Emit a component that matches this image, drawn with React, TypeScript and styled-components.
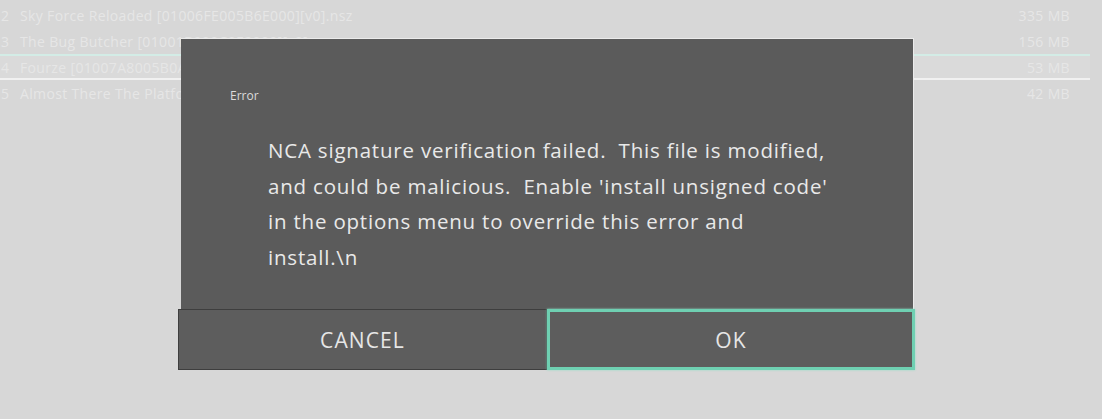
import styled, { createGlobalStyle } from 'styled-components'

const GlobalStyle = createGlobalStyle`
    html, body {
        margin: 0;
        padding: 0;
        background: #d7d7d7;
    }
    body {
        font-family: 'Open Sans', 'Noto Sans', sans-serif;
    }
`

const games = [
    { idx: 2, name: 'Sky Force Reloaded [01006FE005B6E000][v0].nsz', size: '335 MB' },
    { idx: 3, name: 'The Bug Butcher [01001B900C0E2000][v0].nsp', size: '156 MB' },
    { idx: 4, name: 'Fourze [01007A8005B0A000][v0].nsp', size: '53 MB', selected: true },
    { idx: 5, name: 'Almost There The Platformer [0100E4A00B1E0000][v0].nsp', size: '42 MB' },
]

const message = [
    'NCA signature verification failed.  This file is modified,',
    "and could be malicious.  Enable 'install unsigned code'",
    'in the options menu to override this error and',
    'install.\\n',
]

export default function App() {
    return (
        <>
            <GlobalStyle />
            <Screen>
                <List>
                    {games.map((g) => (
                        <Row key={g.idx} $selected={!!g.selected}>
                            <Index>{g.idx}</Index>
                            <Name>{g.name}</Name>
                            <Size>{g.size}</Size>
                        </Row>
                    ))}
                </List>

                <Dialog>
                    <Panel>
                        <Title>Error</Title>
                        <Message>
                            {message.map((line) => (
                                <Line key={line}>{line}</Line>
                            ))}
                        </Message>
                    </Panel>
                    <Buttons>
                        <Button>CANCEL</Button>
                        <Button $focused>OK</Button>
                    </Buttons>
                </Dialog>
            </Screen>
        </>
    )
}

const Screen = styled.div`
    position: relative;
    width: 1102px;
    height: 419px;
    overflow: hidden;
    background: #d7d7d7;
`

const List = styled.div`
    display: flex;
    flex-direction: column;
    width: 1090px;
    padding-top: 2px;
`

const Row = styled.div<{ $selected: boolean }>`
    display: flex;
    align-items: center;
    height: 26px;
    box-sizing: border-box;
    font-size: 14px;
    letter-spacing: 0.35px;
    color: #e6e6e6;
    background: ${(p) => (p.$selected ? '#dadada' : 'transparent')};
    border-top: ${(p) => (p.$selected ? '2px solid #d3ece6' : 'none')};
    border-bottom: ${(p) => (p.$selected ? '2px solid #f1f1f1' : 'none')};
`

const Index = styled.span`
    width: 20px;
    padding-left: 1px;
    box-sizing: border-box;
`

const Name = styled.span`
    flex: 1;
    white-space: nowrap;
`

const Size = styled.span`
    padding-right: 20px;
`

const Dialog = styled.div`
    position: absolute;
    left: 178px;
    top: 38px;
    width: 737px;
    display: flex;
    flex-direction: column;
    align-items: stretch;
`

const Panel = styled.div`
    margin: 0 1px 0 3px;
    height: 271px;
    box-sizing: border-box;
    background: #5b5b5b;
    border-top: 1px solid #ebebeb;
    border-right: 1px solid #ebebeb;
    padding: 49px 0 0 49px;
    color: #e9e9e9;
`

const Title = styled.div`
    font-size: 12px;
    line-height: 16px;
    color: #dcdcdc;
`

const Message = styled.div`
    margin: 29px 0 0 38px;
    font-size: 20.5px;
    letter-spacing: 0.8px;
    line-height: 35.5px;
    white-space: pre;
`

const Line = styled.div``

const Buttons = styled.div`
    display: grid;
    grid-template-columns: 369px 368px;
    height: 61px;
`

const Button = styled.div<{ $focused?: boolean }>`
    display: flex;
    align-items: center;
    justify-content: center;
    box-sizing: border-box;
    background: #5d5d5d;
    color: #e6e6e6;
    font-size: 21px;
    letter-spacing: 1.1px;
    border: ${(p) => (p.$focused ? '3px solid #6fd0b2' : '1px solid #3e3e3e')};
    box-shadow: ${(p) => (p.$focused ? '0 0 2px #8fe0c6' : 'none')};
`
